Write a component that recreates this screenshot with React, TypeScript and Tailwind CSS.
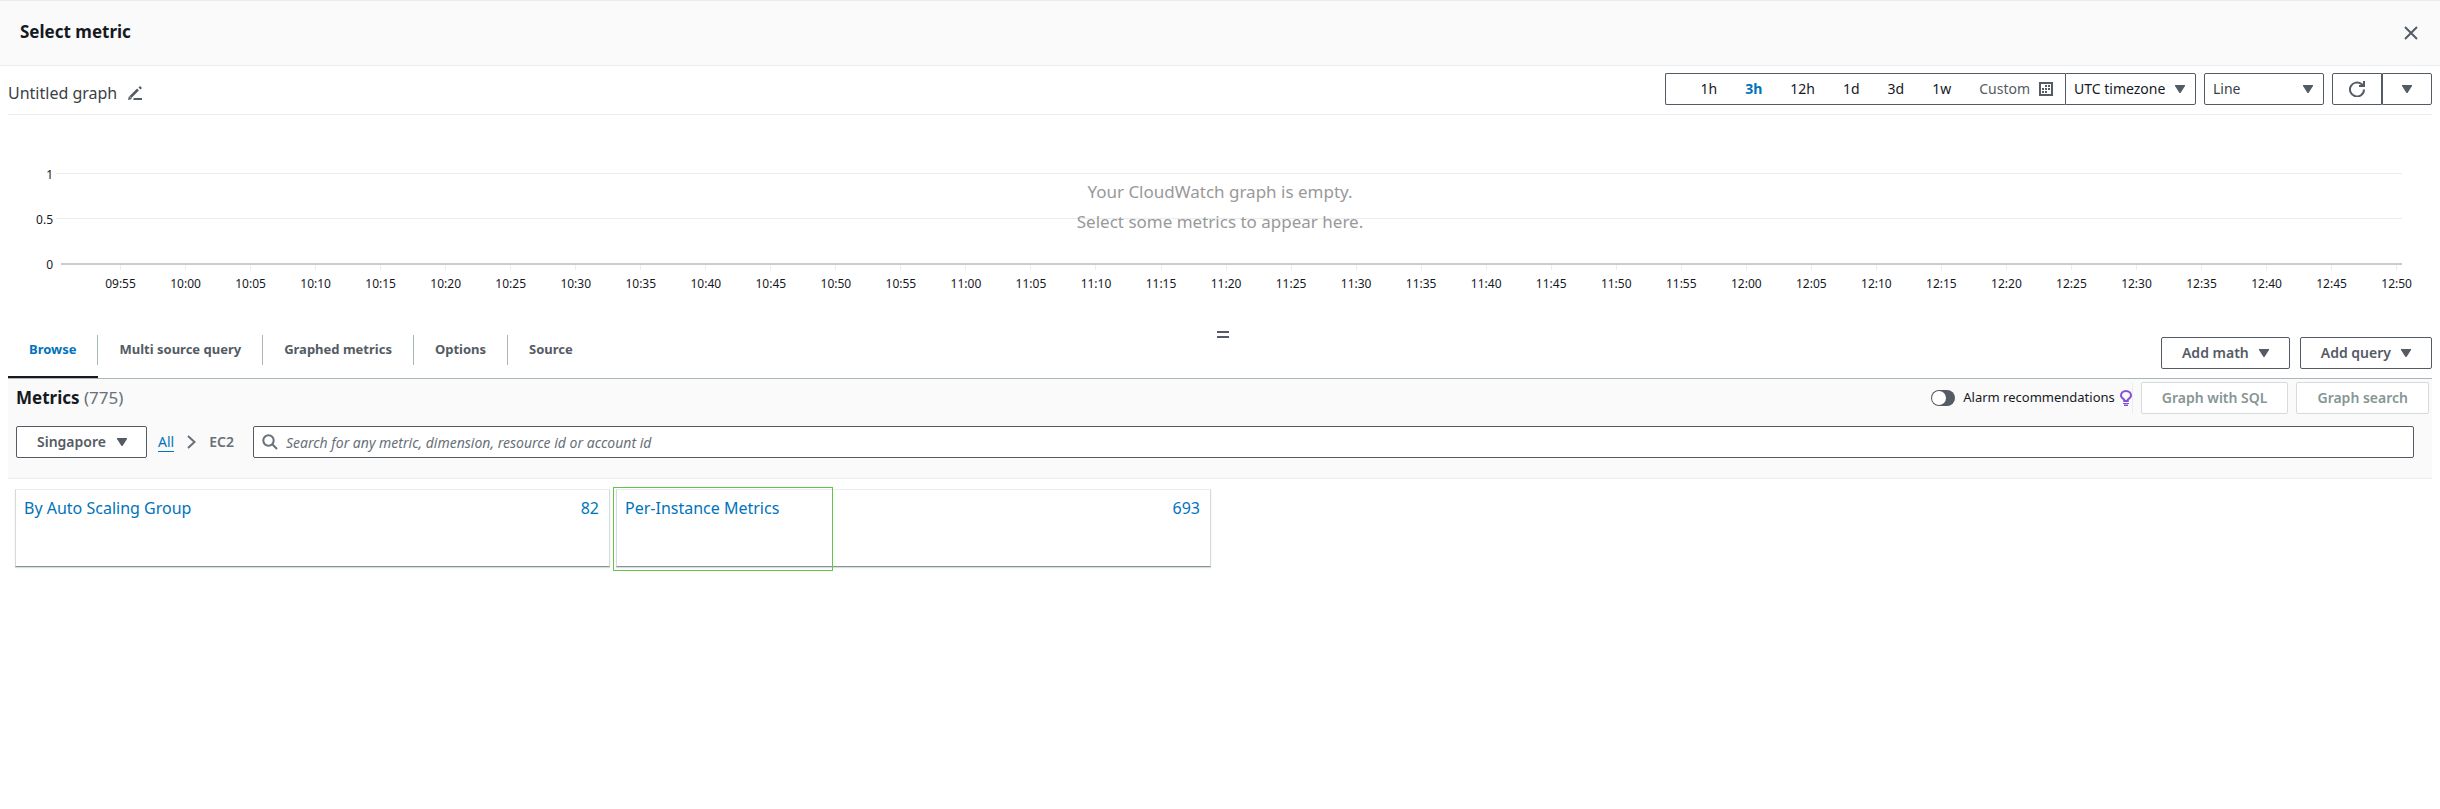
import { useState } from "react";
import type { ReactNode } from "react";

const ranges = ["1h", "3h", "12h", "1d", "3d", "1w"];
const tabs = ["Browse", "Multi source query", "Graphed metrics", "Options", "Source"];

const timeLabels = Array.from({ length: 36 }, (_, i) => {
  const minutes = 9 * 60 + 55 + i * 5;
  const pad = (n: number) => String(n).padStart(2, "0");
  return `${pad(Math.floor(minutes / 60))}:${pad(minutes % 60)}`;
});

function Caret() {
  return (
    <svg viewBox="0 0 10 8" className="h-2 w-[10px] shrink-0 fill-[#545b64]" aria-hidden="true">
      <path d="M0 0h10v1L5.500 8h-1L0 1z" />
    </svg>
  );
}

function Dropdown({
  label,
  options,
  className,
  caretClassName = "right-[11px]",
}: {
  label: string;
  options: string[];
  className: string;
  caretClassName?: string;
}) {
  return (
    <div className="relative flex h-8 items-center">
      <select
        aria-label={label}
        className={`h-8 appearance-none border border-[#545b64] bg-white text-sm ${className}`}
      >
        {options.map((o) => (
          <option key={o}>{o}</option>
        ))}
      </select>
      <span className={`pointer-events-none absolute ${caretClassName}`}>
        <Caret />
      </span>
    </div>
  );
}

function Button({ children, disabled = false }: { children: ReactNode; disabled?: boolean }) {
  return (
    <button
      type="button"
      disabled={disabled}
      className="flex h-8 items-center gap-[10px] rounded-[2px] border border-[#545b64] bg-white px-5 text-sm font-semibold whitespace-nowrap text-[#545b64] disabled:border-[#d5dbdb] disabled:text-[#879596]"
    >
      {children}
    </button>
  );
}

function TimeBar() {
  const [range, setRange] = useState("3h");
  return (
    <div className="flex items-center gap-2">
      <div className="flex">
        <div className="flex h-8 items-center gap-7 rounded-l-[2px] border border-r-0 border-[#545b64] bg-white pr-3 pl-[34px] text-sm">
          {ranges.map((r) => (
            <button
              key={r}
              type="button"
              onClick={() => setRange(r)}
              className={r === range ? "font-bold text-[#0073bb]" : "text-[#16191f]"}
            >
              {r}
            </button>
          ))}
          <button type="button" className="flex items-center gap-[9px] text-[#545b64]">
            Custom
            <svg viewBox="0 0 14 14" className="size-[14px]" aria-hidden="true">
              <path className="fill-[#545b64]" d="M0 0h14v14H0z" />
              <path className="fill-white" d="M2 2h10v10H2z" />
              <path
                className="fill-[#545b64]"
                d="M6 3h2v2H6zM9 3h2v2H9zM3 6h2v2H3zM6 6h2v2H6zM9 6h2v2H9zM3 9h2v2H3zM6 9h2v2H6z"
              />
            </svg>
          </button>
        </div>
        <Dropdown
          label="Timezone"
          options={["UTC timezone", "Local timezone"]}
          className="w-[131px] rounded-r-[2px] pl-2 text-[#16191f]"
        />
      </div>
      <Dropdown
        label="Graph type"
        options={["Line", "Stacked area", "Number", "Bar", "Pie"]}
        className="w-[120px] rounded-[2px] pl-2 text-[#3a3f47]"
      />
      <div className="flex">
        <button
          type="button"
          aria-label="Refresh"
          className="flex h-8 w-[50px] items-center justify-center rounded-l-[2px] border border-[#545b64]"
        >
          <svg viewBox="0 0 16 16" className="size-4 fill-none stroke-[#545b64] stroke-2" aria-hidden="true">
            <path d="M15 8.500A7 7 0 1 1 12.500 3.100L14.500 5" />
            <path d="M15 0v5h-5" />
          </svg>
        </button>
        <button
          type="button"
          aria-label="Refresh options"
          className="flex h-8 w-[50px] items-center justify-center rounded-r-[2px] border border-[#545b64]"
        >
          <Caret />
        </button>
      </div>
    </div>
  );
}

function Chart() {
  return (
    <section aria-label="Graph" className="relative pt-[49px] pr-[30px]">
      <div className="flex">
        <div className="flex h-[112px] w-12 flex-col justify-between pr-[3px] text-right text-xs leading-[22px] text-[#16191f]">
          <span>1</span>
          <span>0.5</span>
          <span>0</span>
        </div>
        <div className="flex-1 pt-[9px]">
          <div className="h-[45px] border-t border-[#eaeded]" />
          <div className="h-[45px] border-t border-[#eaeded]" />
          <div className="ml-[5px] border-t-2 border-[#ccc]" />
          <div className="-mr-[27px] ml-8 flex">
            {timeLabels.map((t) => (
              <div key={t} className="flex flex-1 flex-col items-center">
                <span className="h-[5px] w-px bg-[#eaeded]" />
                <span className="pt-[6px] text-xs leading-4 text-[#16191f]">{t}</span>
              </div>
            ))}
          </div>
        </div>
      </div>
      <p className="absolute inset-x-0 top-[62px] text-center text-[17px] leading-[30px] text-[#999]">
        Your CloudWatch graph is empty.
        <br />
        Select some metrics to appear here.
      </p>
    </section>
  );
}

function Card({ name, count, highlighted = false }: { name: string; count: number; highlighted?: boolean }) {
  return (
    <a
      href="#"
      className="relative flex h-[78px] w-[595px] items-start justify-between border border-t-[#eaeded] border-r-[#d5dbdb] border-b-[#879596] border-l-[#d5dbdb] bg-white py-[7px] pr-[10px] pl-2 text-base leading-[22px] text-[#0073bb] shadow-[0_1px_1px_rgba(0,28,36,0.15)]"
    >
      <span>{name}</span>
      <span>{count}</span>
      {highlighted && <span className="absolute -top-[3px] -left-1 h-[84px] w-[220px] border border-[#62c546]" />}
    </a>
  );
}

export default function App() {
  const [tab, setTab] = useState("Browse");
  const [alarms, setAlarms] = useState(false);
  return (
    <div className="min-h-screen bg-white font-['Noto_Sans',sans-serif] text-[#16191f]">
      <header className="flex h-[66px] items-center justify-between border-y border-[#eaeded] bg-[#fafafa] pr-[21px] pl-5">
        <h1 className="pb-[2px] text-[17px] leading-[22px] font-bold">Select metric</h1>
        <button type="button" aria-label="Close">
          <svg viewBox="0 0 16 16" className="size-4 fill-none stroke-[#545b64] stroke-2" aria-hidden="true">
            <path d="M2 2l12 12M14 2L2 14" />
          </svg>
        </button>
      </header>

      <main className="px-2">
        <div className="flex h-[49px] items-start justify-between border-b border-[#eaeded] pt-[7px]">
          <div className="flex items-center gap-[11px] pt-[9px]">
            <h2 className="text-base leading-[22px] text-[#3a3f47]">Untitled graph</h2>
            <button type="button" aria-label="Rename graph">
              <svg viewBox="0 0 14 14" className="size-[14px]" aria-hidden="true">
                <path className="fill-none stroke-[#545b64] stroke-[2.5]" d="M2.500 11L10 3.500" />
                <path className="fill-[#545b64]" d="M10.500 1.500L12 0l2 2-1.500 1.500zM0 14l1-4 3 3zM5.500 12H14v2H5.500z" />
              </svg>
            </button>
          </div>
          <TimeBar />
        </div>

        <Chart />

        <div className="flex justify-center pt-[39px] pl-[6px]">
          <span role="separator" aria-label="Resize graph" className="h-[7px] w-3 border-y-2 border-[#545b64]" />
        </div>

        <div className="-mt-[3px] flex items-start justify-between border-b border-[#aab7b8]">
          <div role="tablist" className="flex">
            {tabs.map((t) => (
              <button
                key={t}
                type="button"
                role="tab"
                aria-selected={t === tab}
                onClick={() => setTab(t)}
                className={`group border-b-2 text-[13px] font-bold ${t === tab ? "border-[#16191f] text-[#0073bb]" : "border-transparent text-[#545b64]"}`}
              >
                <span className="mb-[11px] flex h-[30px] items-center border-r border-[#aab7b8] px-[21px] group-last:border-transparent">
                  {t}
                </span>
              </button>
            ))}
          </div>
          <div className="flex gap-[10px] pt-[2px]">
            <Button>
              Add math <Caret />
            </Button>
            <Button>
              Add query <Caret />
            </Button>
          </div>
        </div>

        <section className="border-b border-[#eaeded] bg-[#fafafa] pb-5">
          <div className="flex items-center justify-between pt-[3px] pr-[3px] pl-2">
            <h2 className="text-[17px] leading-[22px] font-bold">
              Metrics <span className="font-normal text-[#687078]">(775)</span>
            </h2>
            <div className="flex items-center gap-2">
              <div className="flex h-[30px] items-center border-r border-[#eaeded]">
                <label className="flex items-center gap-2 text-[13px] text-[#16191f]">
                  <input
                    type="checkbox"
                    role="switch"
                    checked={alarms}
                    onChange={(e) => setAlarms(e.target.checked)}
                    className="peer sr-only"
                  />
                  <span className="flex h-4 w-6 rounded-full bg-[#545b64] p-px peer-checked:justify-end peer-checked:bg-[#0073bb]">
                    <span className="size-[14px] rounded-full bg-white" />
                  </span>
                  Alarm recommendations
                </label>
                <svg viewBox="0 0 12 16" className="ml-[5px] h-4 w-3" aria-hidden="true">
                  <path
                    className="fill-none stroke-[#8451d6] stroke-2"
                    d="M4.200 11V9.500C2.500 8.500 1 7.200 1 5.500a5 4.500 0 0 1 10 0C11 7.200 9.500 8.500 7.800 9.500V11z"
                  />
                  <path className="fill-[#8451d6]" d="M3 13h6v1H3zM4 14.500h4V16H4z" />
                </svg>
              </div>
              <Button disabled>Graph with SQL</Button>
              <Button disabled>Graph search</Button>
            </div>
          </div>

          <div className="flex items-center pt-3 pr-[18px] pl-2">
            <Dropdown
              label="Region"
              options={["Singapore", "Tokyo", "Sydney"]}
              className="w-[131px] rounded-[2px] pl-5 font-semibold text-[#545b64]"
              caretClassName="right-5"
            />
            <nav aria-label="Breadcrumb" className="flex items-center pr-[19px] pl-[11px] text-sm leading-[18px]">
              <a href="#" className="border-b border-[#0073bb] text-[#0073bb]">
                All
              </a>
              <svg viewBox="0 0 9 14" className="mx-[13px] h-[14px] w-[9px] fill-none stroke-[#687078] stroke-2" aria-hidden="true">
                <path d="M1 1l6.500 6L1 13" />
              </svg>
              <span className="font-semibold text-[#687078]">EC2</span>
            </nav>
            <div className="flex h-8 flex-1 items-center gap-2 rounded-[2px] border border-[#545b64] bg-white px-2">
              <svg viewBox="0 0 16 16" className="size-4 shrink-0 fill-none stroke-[#687078] stroke-2" aria-hidden="true">
                <circle cx="6.500" cy="6.500" r="5.200" />
                <path d="M10.300 10.300L15 15" />
              </svg>
              <input
                type="search"
                aria-label="Search metrics"
                placeholder="Search for any metric, dimension, resource id or account id"
                className="h-full min-w-0 flex-1 bg-transparent text-sm outline-none placeholder:text-[#687078] placeholder:italic"
              />
            </div>
          </div>
        </section>

        <div className="flex flex-wrap gap-[6px] pt-[10px] pl-[7px]">
          <Card name="By Auto Scaling Group" count={82} />
          <Card name="Per-Instance Metrics" count={693} highlighted />
        </div>
      </main>
    </div>
  );
}
